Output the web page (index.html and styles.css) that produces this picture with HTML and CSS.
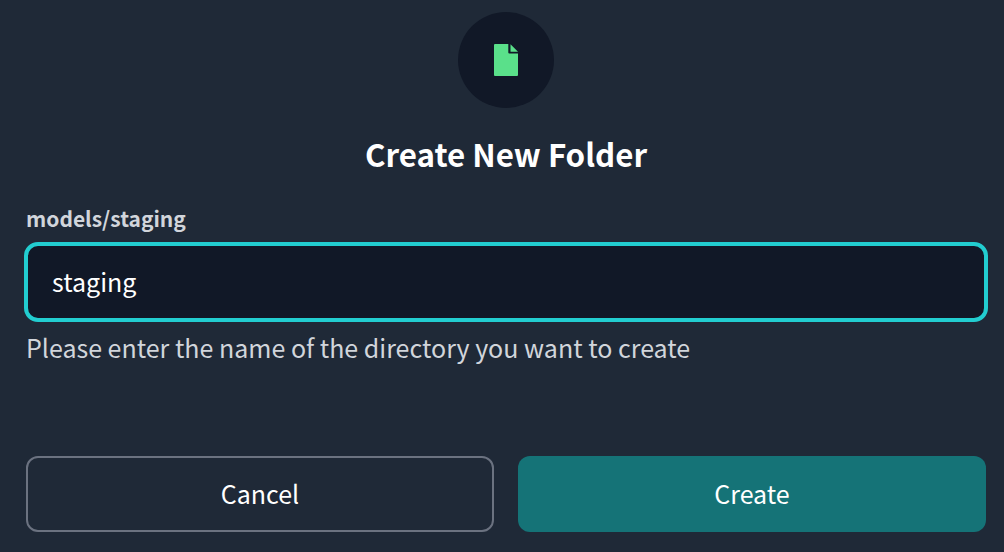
FILE: index.html
```html
<!DOCTYPE html>
<html lang="en">
<head>
<meta charset="utf-8">
<title>Create New Folder</title>
<link rel="stylesheet" href="styles.css">
</head>
<body>
<div class="modal">
  <div class="icon-circle">
    <svg class="icon" viewBox="0 0 24 32" width="24" height="32" aria-hidden="true">
      <path d="M1 0H14.300V8.500Q14.300 9.500 15.300 9.500H24V31Q24 32 23 32H1Q0 32 0 31V1Q0 0 1 0Z"/>
      <path d="M16.500 0.300 24 7.800H16.500Z"/>
    </svg>
  </div>
  <h1 class="title">Create New Folder</h1>
  <label class="label" for="dir">models/staging</label>
  <div class="input-box"><input id="dir" class="input" type="text" value="staging"></div>
  <p class="help">Please enter the name of the directory you want to create</p>
  <div class="actions">
    <button class="btn btn-cancel" type="button">Cancel</button>
    <button class="btn btn-create" type="button">Create</button>
  </div>
</div>
</body>
</html>
```

FILE: styles.css
```css
* { box-sizing: border-box; }
html, body { margin: 0; height: 100%; }
body {
  background: #1f2937;
  font-family: "Noto Sans CJK JP", "Noto Sans", sans-serif;
  overflow: hidden;
}
.modal {
  display: flex;
  flex-direction: column;
  height: 552px;
  padding: 12px 18px 20px 26px;
}
.icon-circle {
  width: 96px;
  height: 96px;
  border-radius: 50%;
  background: #111827;
  align-self: center;
  display: flex;
  align-items: center;
  justify-content: center;
}
.icon { fill: #5ae08a; display: block; }
.title {
  margin: 24px 0 0;
  text-align: center;
  font-size: 31.3px;
  line-height: 44px;
  font-weight: 600;
  color: #fff;
}
.label {
  margin-top: 26px;
  font-size: 21px;
  line-height: 32px;
  font-weight: 700;
  color: #d1d5db;
}
.input-box { margin: 8px 0 0 -2px; }
.input {
  display: block;
  width: 964px;
  height: 80px;
  padding: 0 24px 2px;
  border: 4px solid #22cdd0;
  border-radius: 14px;
  background: #111827;
  color: #fff;
  font: inherit;
  font-size: 25px;
  outline: none;
}
.help {
  margin: 5px 0 0;
  font-size: 25px;
  line-height: 40px;
  color: #d1d5db;
}
.actions {
  margin-top: auto;
  display: grid;
  grid-template-columns: 1fr 1fr;
  gap: 24px;
  width: 960px;
}
.btn {
  height: 76px;
  padding: 0 0 2px;
  border-radius: 12px;
  font: inherit;
  font-size: 25px;
  font-weight: 400;
  color: #fff;
}
.btn-cancel { background: transparent; border: 2px solid #6b7280; }
.btn-create { background: #157377; border: 0; }
```
